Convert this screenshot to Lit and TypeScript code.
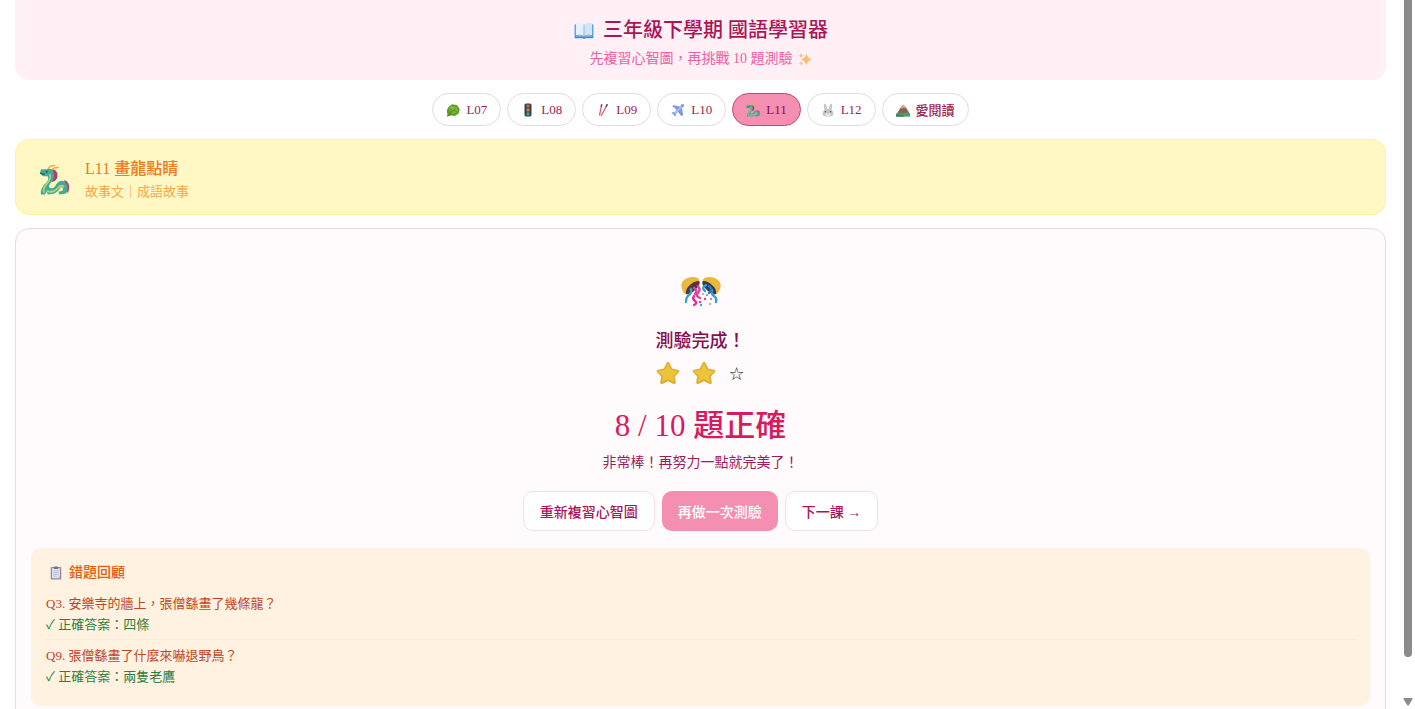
import { LitElement, html, svg, css } from "lit";
import { customElement, state } from "lit/decorators.js";

const art: Record<string, unknown> = {
  book: svg`
    <path d="M1 8 L3 6 V26 H29 V6 L31 8 V29 H18 Q16 31 14 29 H1Z" fill="#3b8fd0"/>
    <path d="M3 5 Q10 3 16 7 V26 Q10 23 3 25Z" fill="#e6f0fa"/>
    <path d="M29 5 Q22 3 16 7 V26 Q22 23 29 25Z" fill="#d3e4f5"/>
    <path d="M16 7 V26" stroke="#8fb4d8" stroke-width="1.4"/>
    <path d="M3 25 Q10 23 16 26 Q22 23 29 25" fill="none" stroke="#6ba6dc" stroke-width="1.5"/>`,
  sparkles: svg`
    <path d="M19 3 Q21 14 31 17 Q21 20 19 31 Q17 20 7 17 Q17 14 19 3Z" fill="#fbbf6c"/>
    <path d="M7 2 Q8 7 12 8 Q8 9 7 14 Q6 9 2 8 Q6 7 7 2Z" fill="#f7b7a3"/>
    <path d="M7 20 Q8 25 12 26 Q8 27 7 31 Q6 27 2 26 Q6 25 7 20Z" fill="#fbc98a"/>`,
  leaf: svg`
    <path d="M3 14 Q5 8 9 7 Q13 1 19 4 Q26 3 28 9 Q33 13 30 19 Q30 26 24 27 Q19 32 13 28 Q8 30 2 31 Q4 27 3 24 Q1 18 3 14Z" fill="#5f9a2a"/>
    <path d="M8 12 Q12 5 18 8 Q25 8 26 14 Q28 21 21 23 Q14 26 10 21 Q6 17 8 12Z" fill="#7fbd38"/>
    <path d="M3 30 L12 21 L22 12 M12 21 L11 13 M17 17 L24 19" stroke="#4b7f1e" stroke-width="2" fill="none"/>`,
  light: svg`
    <rect x="8" y="1" width="16" height="30" rx="4" fill="#37414b"/>
    <circle cx="16" cy="7" r="4" fill="#e0564e"/><circle cx="16" cy="16" r="4" fill="#b58a35"/><circle cx="16" cy="25" r="4" fill="#42a57a"/>`,
  sticks: svg`
    <path d="M13 3 L8 29" stroke="#d0606c" stroke-width="3"/><path d="M26 3 L12 29" stroke="#c9606c" stroke-width="3"/>
    <path d="M13 3 L12 8 M26 3 L23 9" stroke="#59424b" stroke-width="3"/>`,
  plane: svg`
    <path d="M5 5 L14 8 L22 13 L27 27 L24 30 L16 20Z" fill="#6a8fd6"/>
    <path d="M3 8 L6 5 L20 8 L25 3 Q31 0 30 6 L25 12 L28 26 L25 29 L18 19 L11 25 L11 30 L9 31 L6 26 L1 23 L3 21 L8 21 L14 15Z" fill="#7d9ddd"/>
    <path d="M8 23 L26 4 Q30 2 28 6 L10 25Z" fill="#b9c9ee"/>
    <path d="M24 5 L28 8" stroke="#45568c" stroke-width="2"/>`,
  dragon: svg`
    <path d="M16 1 Q10 1 9 6 M20 3 Q14 3 12 7" fill="none" stroke="#e3b54a" stroke-width="1.6" stroke-linecap="round"/>
    <path d="M15 5 Q20 7 19 13 Q18 17 14 18 L12 15 Q14 11 13 7Z" fill="#b23c72"/>
    <path d="M26 16 Q32 18 31 25 L30 30 L27 24Z" fill="#b23c72"/>
    <path d="M2 31 Q1 25 6 20 Q11 16 9 12 L4 12 L1 9 L2 5 L8 5 Q13 3 15 8 Q17 13 13 18 Q9 22 11 24 Q15 26 18 20 Q22 15 27 18 Q32 23 28 30 L21 31 L20 28 L24 27 Q26 24 23 23 Q20 28 16 30 L9 31 L8 28 L6 31Z" fill="#43aa98"/>
    <path d="M11 10 Q13 15 8 20 Q4 24 5 29 M8 27 Q14 30 19 25 Q22 20 26 23" fill="none" stroke="#b9cf73" stroke-width="1.8"/>
    <path d="M1 9 L6 10" stroke="#246b6f" stroke-width="1.5"/><circle cx="8" cy="7.5" r="1" fill="#254d53"/>`,
  rabbit: svg`
    <path d="M9 17 Q4 4 9 1 Q13 3 14 13 H18 Q19 3 23 1 Q28 4 23 17Z" fill="#bdbfc4"/>
    <path d="M10 5 Q12 9 12 15 M22 5 Q20 9 20 15" stroke="#e8d3d8" stroke-width="2" fill="none"/>
    <path d="M4 22 Q6 13 16 13 Q26 13 28 22 Q30 31 16 31 Q2 31 4 22Z" fill="#c4c6cb"/>
    <ellipse cx="16" cy="26" rx="6" ry="4" fill="#f0eff1"/><circle cx="10" cy="20" r="1.8" fill="#4c4f55"/><circle cx="22" cy="20" r="1.8" fill="#4c4f55"/>
    <path d="M14 22 H18 L16 24.5Z" fill="#c07d8a"/><path d="M16 24 V28" stroke="#77777d"/>`,
  mountain: svg`
    <path d="M1 26 L12 8 L17 4 L23 10 L31 24 V30 H1Z" fill="#8a6251"/>
    <path d="M12 8 L17 4 L23 10 L20 12 L17 10 L14 13 L11 11Z" fill="#c8b3ab"/>
    <path d="M0 24 Q8 20 16 24 Q24 19 32 24 V31 H0Z" fill="#45a06a"/>
    <path d="M0 28 Q10 24 20 31 H0Z" fill="#2f8159"/>`,
  clipboard: svg`
    <rect x="4" y="2" width="24" height="29" rx="2" fill="#9a8798"/><path d="M7 5 H25 V28 H7Z" fill="#e0e2f2"/>
    <rect x="11" y="1" width="10" height="6" rx="2" fill="#6c7590"/>
    <path d="M10 11 H22 M10 15 H22 M10 19 H22 M10 23 H17" stroke="#a9afd0" stroke-width="1.5"/><path d="M25 22 V28 H18Z" fill="#b9bedb"/>`,
  star: svg`
    <path d="M16 1 Q17.500 1 18.500 3.500 L21.500 10 L29 11.500 Q32.500 12.500 30.500 15 L25 20.500 L26.500 28 Q26.500 31.500 23.500 30.500 L16 27 L8.500 30.500 Q5.500 31.500 5.500 28 L7 20.500 L1.500 15 Q-.5 12.500 3 11.500 L10.500 10 L13.500 3.500 Q14.500 1 16 1Z" fill="#dfae30"/>
    <path d="M16 2.500 L20 11.500 L29.500 13.500 L22.500 20 L24.500 28 L16 24 L7.500 28 L9.500 20 L2.500 13.500 L12 11.500Z" fill="#ebc43c"/>`,
};

const icon = (name: string, cls: string) =>
  html`<svg class=${cls} viewBox="0 0 32 32" aria-hidden="true">${art[name]}</svg>`;

const party = html`<svg class="party" viewBox="0 0 40 32" aria-hidden="true">
  <path d="M3 17 Q-2 10 2 5 Q8 -1 17 2 L19 6 L8 18 Q5 19 3 17Z" fill="#e9b93f"/>
  <path d="M37 17 Q42 10 38 5 Q32 -1 23 2 L21 6 L32 18 Q35 19 37 17Z" fill="#e9b93f"/>
  <path d="M5 18 Q4 13 9 9 Q13 5 18 5 Q20 8 16 12 Q10 19 5 18Z" fill="#5a3540"/>
  <path d="M35 18 Q36 13 31 9 Q27 5 22 5 Q20 8 24 12 Q30 19 35 18Z" fill="#373350"/>
  <g fill="none" stroke-linecap="round" stroke-width="2.400">
    <path d="M10 13 Q11 17 8 19 T5 26" stroke="#3ba5c9"/>
    <path d="M13 12 Q17 14 14 18 M17 10 Q20 14 17 17 T19 22" stroke="#d9479c"/>
    <path d="M13 20 Q11 23 14 25 T13 29" stroke="#d9359a"/>
    <path d="M25 9 Q20 12 24 15 M31 14 Q30 18 33 20 T35 26" stroke="#329fd0"/>
    <path d="M28 10 Q32 13 28 17" stroke="#2878b8"/>
  </g>
  <g fill="#d9479c"><circle cx="24" cy="23" r="1.200"/><circle cx="30" cy="23" r="1"/><circle cx="19" cy="26" r="1.300"/></g>
  <g fill="#3aa6c5"><circle cx="26" cy="19" r="1"/><circle cx="20" cy="29" r="1.200"/></g>
  <g fill="#e58b4b"><circle cx="29" cy="28" r="1"/><circle cx="22" cy="18" r="1"/></g>
</svg>`;

const lessons = [
  ["leaf", "L07"],
  ["light", "L08"],
  ["sticks", "L09"],
  ["plane", "L10"],
  ["dragon", "L11"],
  ["rabbit", "L12"],
  ["mountain", "愛閱讀"],
];

const mistakes = [
  { n: 3, question: "安樂寺的牆上，張僧繇畫了幾條龍？", answer: "四條" },
  { n: 9, question: "張僧繇畫了什麼來嚇退野鳥？", answer: "兩隻老鷹" },
];

@customElement("app-root")
export class AppRoot extends LitElement {
  @state() private current = "L11";

  static styles = css`
    :host {
      display: flex;
      height: 100vh;
      overflow: hidden;
      background: #fff;
      font-family: "Liberation Serif", "Noto Sans CJK TC", serif;
      color: #880e4f;
    }
    * { box-sizing: border-box; }
    h1, h2, h3, p, ul { margin: 0; padding: 0; }
    h1, h2, h3 { font-weight: 500; }
    svg { display: block; flex: none; }
    main {
      flex: 1;
      min-width: 0;
      padding: 0 15px;
      display: flex;
      flex-direction: column;
      gap: 13px;
    }
    main > * { flex: none; }
    .hero {
      background: #fff0f5;
      border-radius: 0 0 14px 14px;
      padding: 15px 16px 9px;
      display: flex;
      flex-direction: column;
      align-items: center;
      gap: 2px;
    }
    .hero h1 {
      display: flex;
      align-items: center;
      gap: 8px;
      font-size: 20px;
      line-height: 30px;
      color: #ad1457;
    }
    .hero p {
      display: flex;
      align-items: center;
      gap: 5px;
      font-size: 14px;
      line-height: 24px;
      color: #ec5fa4;
    }
    .book { width: 22px; height: 20px; }
    .spark { width: 14px; height: 14px; }
    .tabs { display: flex; justify-content: center; gap: 6px; flex-wrap: wrap; }
    button { font-family: inherit; cursor: pointer; margin: 0; }
    .tab {
      display: flex;
      align-items: center;
      gap: 6px;
      padding: 0 13px;
      height: 33px;
      border: 1px solid #e6d9df;
      border-radius: 17px;
      background: #fff;
      color: #9c2456;
      font-size: 13px;
      font-weight: 500;
    }
    .tab.on { background: #f48fb1; border-color: #c2476f; color: #880e4f; }
    .small { width: 14px; height: 14px; }
    .lesson {
      display: flex;
      align-items: center;
      gap: 15px;
      padding: 17px 23px 12px;
      border: 1px solid #fdf2a0;
      border-radius: 14px;
      background: #fff8c5;
    }
    .lesson h2 { font-size: 16px; line-height: 24px; color: #ef7a1f; }
    .lesson p { font-size: 13px; line-height: 21px; color: #f5a94a; }
    .mid { width: 31px; height: 32px; }
    .card {
      border: 1px solid #eed9e1;
      border-radius: 14px;
      background: #fffafc;
      padding: 47px 15px 30px;
      display: flex;
      flex-direction: column;
      align-items: center;
    }
    .party { width: 40px; height: 32px; }
    .done { font-size: 18px; line-height: 28px; margin-top: 19px; }
    .stars {
      display: flex;
      align-items: center;
      gap: 12px;
      height: 36px;
      color: #111;
      font-family: "DejaVu Sans", sans-serif;
      font-size: 18px;
      font-weight: 700;
    }
    .star { width: 24px; height: 24px; }
    .score { font-size: 31px; line-height: 48px; margin-top: 11px; color: #d81b60; font-weight: 500; }
    .note { font-size: 14px; line-height: 26px; color: #9c1c59; }
    .actions { display: flex; gap: 7px; margin: 15px 0 17px; }
    .act {
      height: 40px;
      padding: 0 16px;
      border: 1px solid #f0dfe7;
      border-radius: 10px;
      background: #fff;
      color: #ad1457;
      font-size: 14px;
      font-weight: 500;
    }
    .act.primary { border: 0; background: #f48fb1; color: #fff; }
    .review {
      align-self: stretch;
      padding: 15px 15px 14px;
      border-radius: 10px;
      background: #fff2e0;
    }
    .review h3 {
      display: flex;
      align-items: center;
      gap: 6px;
      padding-left: 3px;
      margin-bottom: 5px;
      font-size: 14px;
      line-height: 20px;
      color: #e65c0c;
    }
    .review ul { list-style: none; font-size: 13px; line-height: 21px; }
    .review li { padding: 5px 0 4px; border-bottom: 1px solid #faead9; color: #bf4526; }
    .review li:last-child { border-bottom: 0; padding-bottom: 5px; }
    .review .answer { color: #2e7d42; }
    .rail {
      width: 14px;
      flex: none;
      display: flex;
      flex-direction: column;
      justify-content: space-between;
      align-items: center;
      padding-bottom: 3px;
    }
    .thumb { width: 8px; height: 93%; background: #8b8b8b; border-radius: 0 0 4px 4px; }
    .down { width: 10px; height: 8px; }
  `;

  render() {
    return html`
      <main>
        <header class="hero">
          <h1>${icon("book", "book")}<span>三年級下學期 國語學習器</span></h1>
          <p><span>先複習心智圖，再挑戰 10 題測驗</span>${icon("sparkles", "spark")}</p>
        </header>
        <nav class="tabs">
          ${lessons.map(
            ([art, name]) => html`<button
              class=${name === this.current ? "tab on" : "tab"}
              @click=${() => (this.current = name)}
            >${icon(art, "small")}<span>${name}</span></button>`
          )}
        </nav>
        <section class="lesson">
          ${icon("dragon", "mid")}
          <div><h2>L11 畫龍點睛</h2><p>故事文｜成語故事</p></div>
        </section>
        <section class="card">
          ${party}
          <h2 class="done">測驗完成！</h2>
          <div class="stars">${icon("star", "star")}${icon("star", "star")}<span>☆</span></div>
          <p class="score">8 / 10 題正確</p>
          <p class="note">非常棒！再努力一點就完美了！</p>
          <div class="actions">
            <button class="act">重新複習心智圖</button>
            <button class="act primary">再做一次測驗</button>
            <button class="act">下一課 →</button>
          </div>
          <section class="review">
            <h3>${icon("clipboard", "small")}<span>錯題回顧</span></h3>
            <ul>
              ${mistakes.map(
                (m) => html`<li>
                  <p>Q${m.n}. ${m.question}</p>
                  <p class="answer">✓ 正確答案：${m.answer}</p>
                </li>`
              )}
            </ul>
          </section>
        </section>
      </main>
      <div class="rail" aria-hidden="true">
        <div class="thumb"></div>
        <svg class="down" viewBox="0 0 10 8"><path d="M1 0 H9 Q10 0 9.500 1 L6 7 Q5 8 4 7 L.5 1 Q0 0 1 0Z" fill="#8b8b8b"/></svg>
      </div>
    `;
  }
}
